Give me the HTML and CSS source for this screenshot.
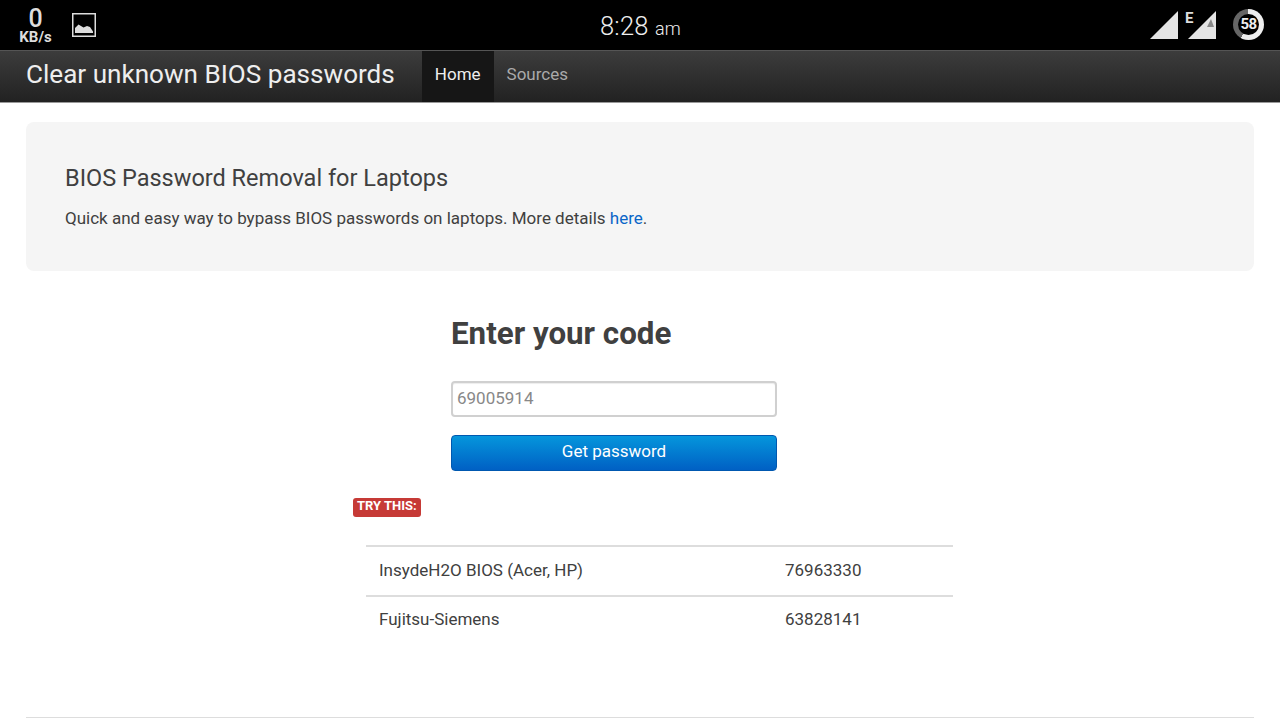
FILE: index.html
```html
<!DOCTYPE html>
<html lang="en">
<head>
<meta charset="utf-8">
<title>Clear unknown BIOS passwords</title>
<link rel="stylesheet" href="styles.css">
</head>
<body>
<div class="status">
  <div class="status-left">
    <div class="speed"><span class="speed-num">0</span><span class="speed-unit">KB/s</span></div>
    <svg class="pic" width="24" height="24" viewBox="0 0 24 24"><rect x="0.75" y="0.75" width="22.5" height="22.5" fill="none" stroke="#ddd" stroke-width="1.5"/><path d="M3 20V15L6.500 11.500 9 13 11.500 14.500 15 13 18 14 21 18.500V20Z" fill="#ddd"/></svg>
  </div>
  <div class="clock">8:28 <small>am</small></div>
  <div class="status-right">
    <svg class="sig" width="28" height="28" viewBox="0 0 28 28"><path d="M0 28L28 0V28Z" fill="#e4e4e4"/></svg>
    <span class="e">E</span>
    <svg class="sig2" width="28" height="28" viewBox="0 0 28 28"><path d="M0 28L28 0V28Z" fill="#e4e4e4"/><path d="M19 16L23 8 26 16Z" fill="#888"/></svg>
    <div class="battery"><span>58</span></div>
  </div>
</div>
<nav class="navbar">
  <a class="brand">Clear unknown BIOS passwords</a>
  <a class="tab active">Home</a>
  <a class="tab">Sources</a>
</nav>
<main class="page">
  <section class="hero">
    <h2>BIOS Password Removal for Laptops</h2>
    <p>Quick and easy way to bypass BIOS passwords on laptops. More details <a href="#">here</a>.</p>
  </section>
  <section class="form">
    <h3>Enter your code</h3>
    <input class="code" type="text" placeholder="69005914">
    <button class="go">Get password</button>
  </section>
  <section class="results">
    <span class="label">TRY THIS:</span>
    <table>
      <tr><td class="name">InsydeH2O BIOS (Acer, HP)</td><td>76963330</td></tr>
      <tr class="last"><td class="name">Fujitsu-Siemens</td><td>63828141</td></tr>
    </table>
  </section>
  <hr class="foot">
</main>
</body>
</html>
```
FILE: styles.css
```css
* { box-sizing: border-box; }
html, body { margin: 0; height: 720px; overflow: hidden; background: #fff; }
body { font-family: Roboto, "Liberation Sans", sans-serif; color: #404040; font-size: 17px; }

.status { height: 50px; background: #000; display: flex; align-items: center; justify-content: space-between; padding: 0 16px 0 18px; position: relative; color: #e8e8e8; }
.status-left { display: flex; align-items: center; gap: 19px; }
.speed { display: flex; flex-direction: column; align-items: center; width: 35px; margin-top: 1px; }
.speed-num { font-size: 25px; font-weight: 500; height: 22px; line-height: 22px; color: #ddd; }
.speed-unit { font-size: 15px; font-weight: 700; height: 14px; line-height: 14px; color: #ddd; }
.pic { display: block; }
.clock { position: absolute; left: 600px; top: 10px; font-size: 25.5px; line-height: 32px; color: #eee; font-weight: 300; letter-spacing: 0.2px; }
.clock small { font-size: 18px; }
.status-right { display: flex; align-items: center; height: 50px; }
.e { font-size: 15px; font-weight: 700; color: #ddd; width: 7px; margin: -15px 0 0 7px; line-height: 16px; }
.sig2 { margin-left: -4px; }
.battery { width: 31px; height: 31px; border-radius: 50%; margin: -1px 0 0 17px; background: conic-gradient(#eee 0 58%, #666 58% 100%); display: flex; align-items: center; justify-content: center; }
.battery span { width: 21px; height: 21px; border-radius: 50%; background: #000; color: #eee; font-size: 15px; font-weight: 700; line-height: 21px; text-align: center; letter-spacing: -0.5px; }

.navbar { height: 53px; padding-left: 26px; border-top: 1px solid #555; border-bottom: 1px solid #999; background: linear-gradient(#3c3c3c, #222); display: flex; align-items: stretch; }
.brand { color: #eee; font-size: 26.1px; line-height: 46px; margin-right: 27px; }
.tab { padding: 0 13px; font-size: 17px; line-height: 47px; color: #aaa; }
.tab.active { background: #161616; color: #eee; }

.page { padding: 19px 26px 0; }
.hero { height: 149px; background: #f5f5f5; border-radius: 8px; padding: 41px 39px 0; }
.hero h2 { margin: 0; font-size: 23.5px; font-weight: 400; line-height: 30px; }
.hero p { margin: 14px 0 0; font-size: 17px; line-height: 22px; }
.hero a { color: #0a66c8; text-decoration: none; }

.form { width: 326px; margin: 44px 0 0 425px; display: flex; flex-direction: column; }
.form h3 { margin: 0; font-size: 31.3px; font-weight: 700; line-height: 38px; }
.code { margin-top: 28px; height: 36px; width: 100%; border: 2px solid #d0d0d0; border-radius: 4px; padding: 0 5px 2px 4px; font: 17px Roboto, sans-serif; background: #fff; box-shadow: inset 0 1px 1px rgba(0,0,0,.075); }
.code::placeholder { color: #888; opacity: 1; }
.go { margin-top: 18px; height: 36px; width: 100%; border: 1px solid #0058b0; border-radius: 4px; padding: 0 0 5px; background: linear-gradient(#0596dc, #0060c4); color: #fff; font: 17px Roboto, sans-serif; }

.results { margin: 27px 0 0 327px; }
.label { display: block; width: 68px; height: 19px; background: #c63a36; color: #fff; border-radius: 3px; font-size: 13px; font-weight: 700; line-height: 15px; padding-left: 4px; white-space: nowrap; }
table { margin: 28px 0 0 13px; width: 587px; border-collapse: collapse; font-size: 17px; }
td { height: 50px; border-top: 2px solid #ddd; padding: 0 13px 2px; }
.last td { height: 47px; }
td.name { width: 406px; }
.foot { border: 0; border-top: 1px solid #ddd; margin: 74px 0 0; }
```
